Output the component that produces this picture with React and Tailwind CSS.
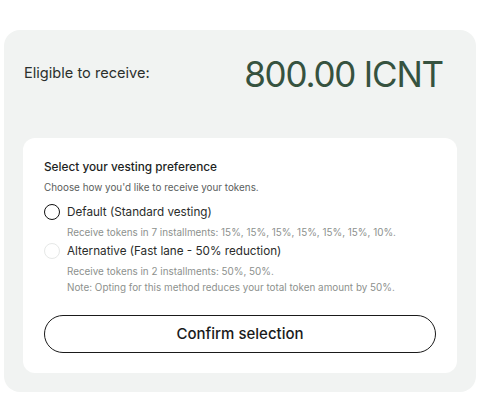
import React, { useState } from "react";

const options = [
  {
    id: "default",
    label: "Default (Standard vesting)",
    notes: ["Receive tokens in 7 installments: 15%, 15%, 15%, 15%, 15%, 15%, 10%."],
  },
  {
    id: "alternative",
    label: "Alternative (Fast lane - 50% reduction)",
    notes: [
      "Receive tokens in 2 installments: 50%, 50%.",
      "Note: Opting for this method reduces your total token amount by 50%.",
    ],
  },
];

export default function App() {
  const [choice, setChoice] = useState(null);

  return (
    <div className="min-h-screen bg-white pt-[30px] pl-[4px] font-['Inter',sans-serif]">
      <div className="w-[472px] rounded-[16px] bg-[#f1f3f2] px-[19px] pb-[19px]">
        <div className="flex h-[88px] items-center justify-between pl-[1px] pr-[14px]">
          <span className="text-[14.6px] text-[#2b2f2c]">Eligible to receive:</span>
          <span className="text-[35px] tracking-[-1.2px] text-[#36523f]">800.00 ICNT</span>
        </div>

        <div className="mt-[20px] rounded-[12px] bg-white px-[21px] pt-[20px] pb-[20px]">
          <h2 className="text-[11.8px] font-medium leading-[18px] text-[#1d1f1e]">
            Select your vesting preference
          </h2>
          <p className="mt-[4px] text-[9.9px] leading-[14px] text-[#5b605d]">
            Choose how you'd like to receive your tokens.
          </p>

          <div className="mt-[8px] flex flex-col gap-[1px]">
            {options.map((opt, idx) => (
              <label key={opt.id} className="flex cursor-pointer flex-col">
                <div className="flex items-center gap-[7px]">
                  <span
                    onClick={() => setChoice(opt.id)}
                    className={
                      idx === 0
                        ? "h-[16px] w-[16px] rounded-full border-[1.5px] border-[#111]"
                        : "h-[16px] w-[16px] rounded-full border border-[#e6e8e7]"
                    }
                  />
                  <span className="text-[11.7px] leading-[20px] text-[#2a2c2b]">{opt.label}</span>
                </div>
                <div className="mt-[2px] pl-[23px]">
                  {opt.notes.map((n) => (
                    <p key={n} className="text-[9.9px] leading-[16px] text-[#8d918e]">
                      {n}
                    </p>
                  ))}
                </div>
              </label>
            ))}
          </div>

          <button className="mt-[20px] flex h-[38px] w-full items-center justify-center rounded-full border border-[#1a1a1a] text-[15px] font-medium text-[#1a1a1a]">
            Confirm selection
          </button>
        </div>
      </div>
    </div>
  );
}
